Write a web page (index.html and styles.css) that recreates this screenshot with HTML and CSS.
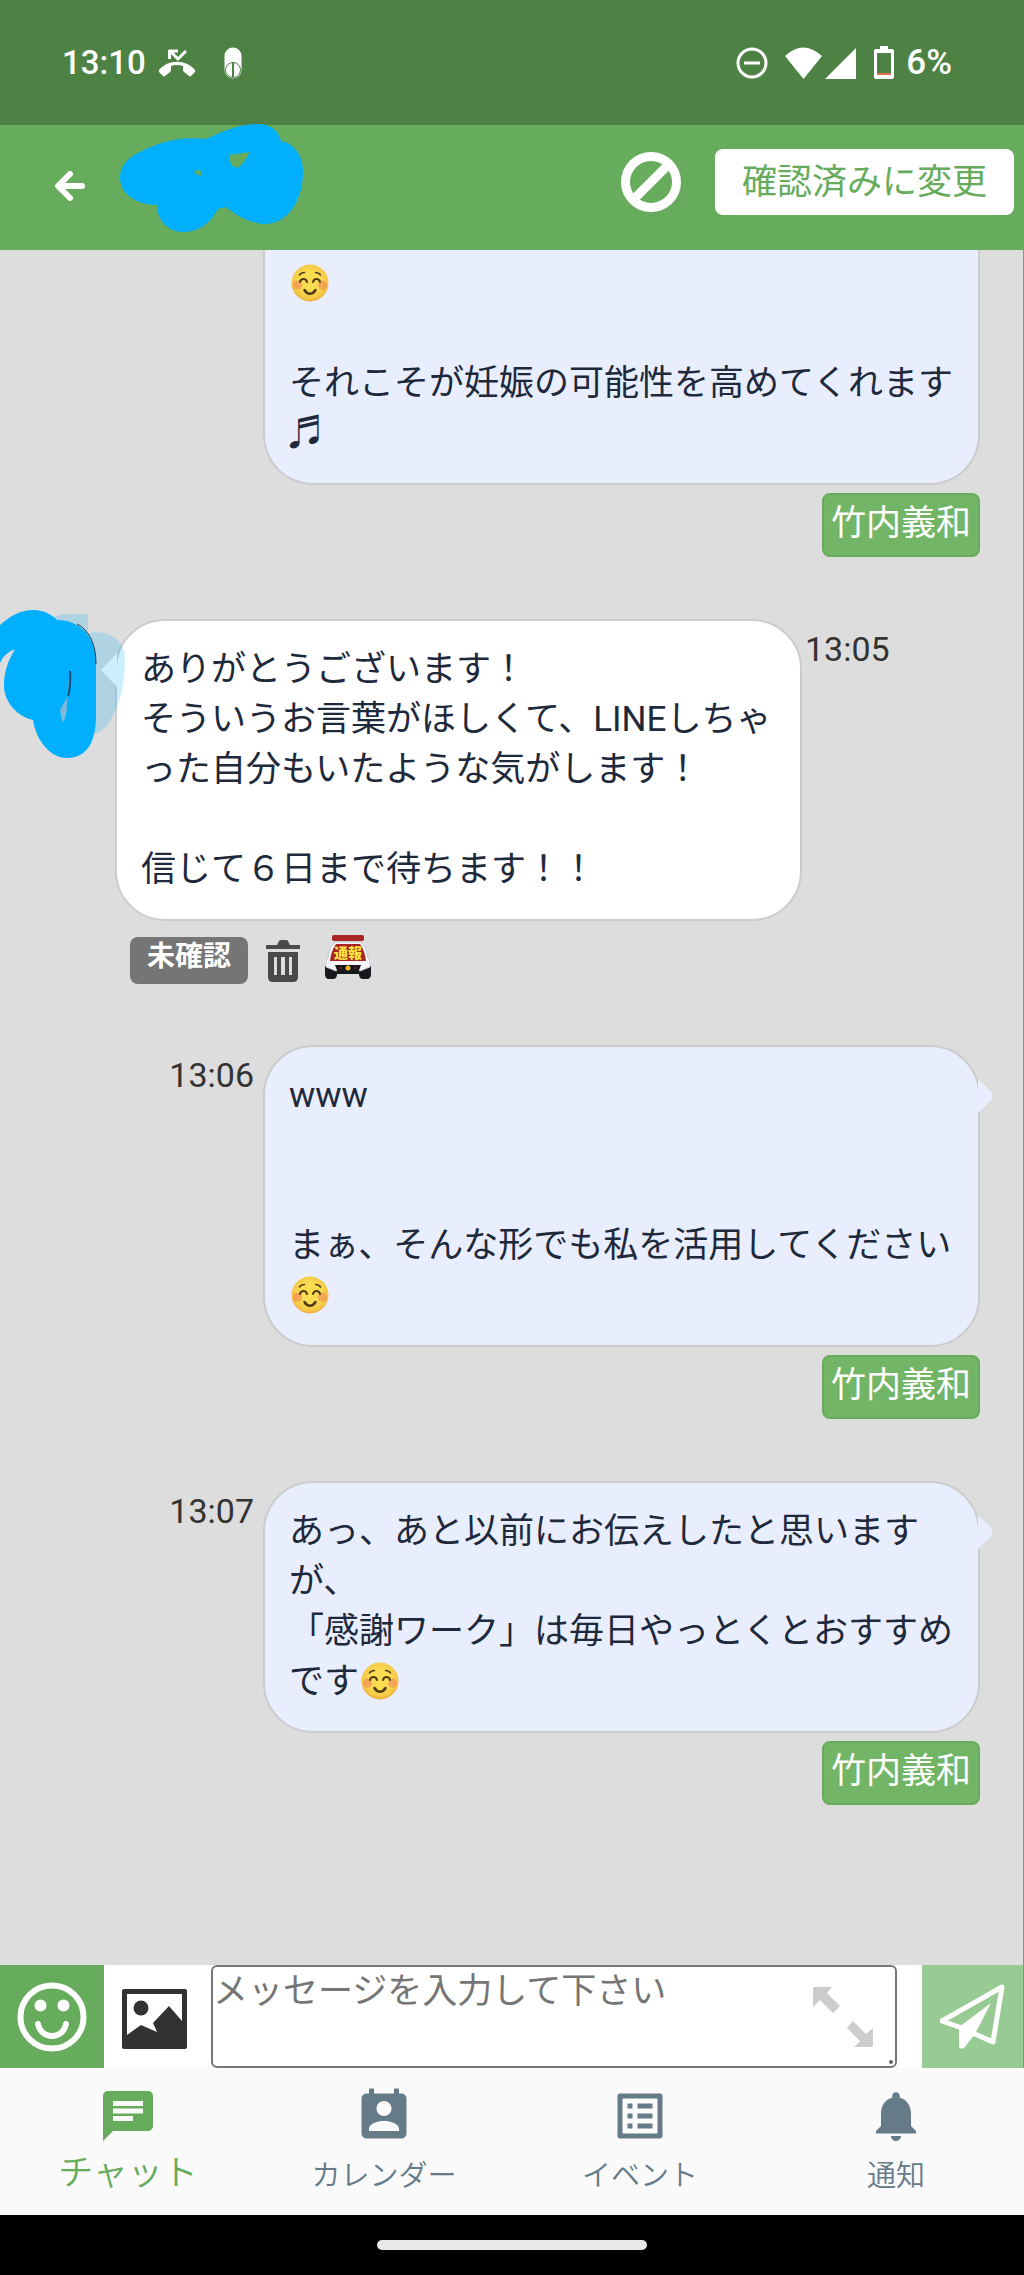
FILE: index.html
```html
<!DOCTYPE html>
<html lang="ja">
<head>
<meta charset="utf-8">
<meta name="viewport" content="width=device-width, initial-scale=1">
<title>チャット</title>
<link rel="stylesheet" href="styles.css">
</head>
<body>
<svg class="defs" aria-hidden="true">
  <defs>
    <radialGradient id="face" cx="50%" cy="45%" r="55%">
      <stop offset="0.5" stop-color="#f9dc50"/>
      <stop offset="0.85" stop-color="#f5c846"/>
      <stop offset="1" stop-color="#eda83c"/>
    </radialGradient>
    <symbol id="smile" viewBox="0 0 40 40">
      <circle cx="21" cy="20" r="18.500" fill="url(#face)"/>
      <circle cx="8.500" cy="22" r="4.500" fill="#f0865c" opacity="0.6"/>
      <circle cx="33.500" cy="22" r="4.500" fill="#f0865c" opacity="0.6"/>
      <g fill="none" stroke="#4f3a1c" stroke-width="2" stroke-linecap="round">
        <path d="M11 19c1-4 6-4 7 0M24 19c1-4 6-4 7 0"/>
        <path d="M10.500 12c1-1.500 3-2.500 5-2.500M31.500 12c-1-1.500-3-2.500-5-2.500" stroke-width="1.500"/>
        <path d="M15.500 27c3 5 8 5 11 0" stroke-width="2.500"/>
      </g>
    </symbol>
  </defs>
</svg>

<div class="app">
  <div class="status">
    <span class="status-time">13:10</span>
    <svg class="missed" viewBox="0 0 38 28" aria-hidden="true">
      <path d="M11 2h9M11.500 1v9M12 2l8 8 8-8" fill="none" stroke="#fff" stroke-width="3"/>
      <path d="M1 21C10 10 28 10 37 21q.5 1 0 2l-4 4q-1 1-2 0l-5-4q-1-1-1-2v-4q-6-2-12 0v4q0 1-1 2l-5 4q-1 1-2 0l-4-4q-.5-1 0-2z" fill="#fff"/>
    </svg>
    <svg class="mouse" viewBox="0 0 18 32" aria-hidden="true">
      <rect x="0.500" y="0.500" width="17" height="31" rx="8.500" fill="#fff"/>
      <circle cx="9" cy="23" r="7.500" fill="none" stroke="#4e8245"/>
      <path d="M9 15v15" stroke="#4e8245" stroke-width="2"/>
    </svg>
    <div class="status-right">
      <svg class="dnd" viewBox="0 0 32 32" aria-hidden="true" fill="none" stroke="#fff" stroke-width="3">
        <circle cx="16" cy="16" r="14"/><path d="M8 16h16"/>
      </svg>
      <svg class="wifi" viewBox="0 0 72 32" aria-hidden="true" fill="#fff">
        <path d="M0 9Q18-8 37 9L18.500 32z"/><path d="M71 1v31H40z"/>
      </svg>
      <svg class="battery" viewBox="0 0 20 33" aria-hidden="true">
        <path d="M6 0h8v3h4q2 0 2 2v26q0 2-2 2H2q-2 0-2-2V5q0-2 2-2h4z" fill="#fff"/>
        <path d="M3 7h14v20H3z" fill="#4e8245"/><path d="M3 27h14v2H3z" fill="#e0704a"/>
      </svg>
      <span>6%</span>
    </div>
  </div>

  <header class="topbar">
    <button class="icon-button back" aria-label="戻る">
      <svg viewBox="0 0 32 32" fill="none" stroke="#fff" stroke-width="6" stroke-linecap="round" stroke-linejoin="round">
        <path d="M16 4L4 16l12 12M5 16h23"/>
      </svg>
    </button>
    <svg class="name-cover" viewBox="0 0 184 108" aria-hidden="true">
      <path fill="#00b0ff" fill-rule="evenodd" d="M0 54C0 42 8 33 22 27C40 18 60 12 86 15C103 7 120 0 139 0C150 0 159 7 161 17C174 19 183 32 183 47C183 78 167 99 146 100C133 100 118 93 106 83L98 85C90 100 78 108 63 108C48 108 37 96 37 81C16 81 0 69 0 54zM74 49l2-3 5 1v5zM109 31l21-3q-5 10-12 16l-7-3z"/>
    </svg>
    <button class="icon-button block" aria-label="ブロック">
      <svg viewBox="0 0 60 60" fill="none" stroke="#fff" stroke-width="9">
        <circle cx="30" cy="30" r="25.500"/><path d="M15 45l30-30"/>
      </svg>
    </button>
    <button class="confirm">確認済みに変更</button>
  </header>

  <main class="chat">
    <article class="message sent">
      <div class="bubble cut">
        <svg class="emoji" role="img" aria-label="にっこり"><use href="#smile"/></svg><br><br>それこそが妊娠の可能性を高めてくれます<br>♬
      </div>
      <span class="sender">竹内義和</span>
    </article>

    <article class="message received">
      <div class="bubble">ありがとうございます！<br>そういうお言葉がほしくて、LINEしちゃった自分もいたような気がします！<br><br>信じて６日まで待ちます！！</div>
      <time>13:05</time>
      <svg class="avatar-cover" viewBox="0 0 125 150" aria-hidden="true">
        <path d="M50 10q7-6 16-6h22v19c22-4 37 8 37 25c0 43-16 77-35 77z" fill="#00b0ff" opacity="0.200"/>
        <path d="M0 15C11 5 22 0 33 0c10 0 18 4 24 10c24 0 39 18 39 42v53c0 27-9 43-29 43c-17 0-31-18-34-38C18 107 4 92 4 76c0-15 4-25 11-37C8 42 4 45 0 53z" fill="#00b0ff"/>
        <path d="M77 14c12 6 19 20 19 40" fill="none" stroke="#1d3a4c"/>
        <path d="M70 61l-2 25-8 14q1 8 3 13q5-9 4-27z" fill="#80b8d8"/>
        <path d="M70 61q1 14-2 25" fill="none" stroke="#174b78" stroke-width="2"/>
      </svg>
      <div class="actions">
        <span class="unread">未確認</span>
        <button class="icon-button trash" aria-label="削除">
          <svg viewBox="0 0 34 42">
            <path d="M0 5h11l2-4q.5-1 2-1h5q1.500 0 2 1l2 4h10v4H0zM2 12h30v25q0 5-5 5H7q-5 0-5-5z" fill="#4a4a4a"/>
            <path d="M8 17h3v18H8zM15 17h4v18h-4zM23 17h3v18h-3z" fill="#ddd"/>
          </svg>
        </button>
        <button class="icon-button report" aria-label="通報">
          <svg viewBox="0 0 48 44">
            <path d="M1 31h46v8q0 5-4 5h-4q-4 0-4-5H13q0 5-4 5H5q-4 0-4-5z" fill="#16181c"/>
            <circle cx="3" cy="26" r="2.500" fill="#dfe2ea"/><circle cx="45" cy="26" r="2.500" fill="#dfe2ea"/>
            <path d="M11 7h26q6 6 7 15q3 4 2 10l-10 4-4-2H16l-4 2-10-4q-1-6 2-10Q5 13 11 7z" fill="#f7f7fa" stroke="#c4c7d2"/>
            <path d="M12 9h24q5 7 6 17H6q1-10 6-17z" fill="#a92523"/>
            <rect x="8" y="0" width="32" height="6" rx="2" fill="#a92523"/>
            <path d="M11 30h26l-3 8H14z" fill="#16181c"/>
            <circle cx="24" cy="33" r="2.500" fill="#f4b42c"/>
            <circle cx="17" cy="33" r="1" fill="#a92523"/><circle cx="31" cy="33" r="1" fill="#a92523"/>
            <text x="24" y="23" text-anchor="middle" class="report-text">通報</text>
          </svg>
        </button>
      </div>
    </article>

    <article class="message sent">
      <time>13:06</time>
      <div class="bubble tail">www<br><br><br>まぁ、そんな形でも私を活用してください<svg class="emoji" role="img" aria-label="にっこり"><use href="#smile"/></svg></div>
      <span class="sender">竹内義和</span>
    </article>

    <article class="message sent">
      <time>13:07</time>
      <div class="bubble tail">あっ、あと以前にお伝えしたと思いますが、<br>「感謝ワーク」は毎日やっとくとおすすめです<svg class="emoji" role="img" aria-label="にっこり"><use href="#smile"/></svg></div>
      <span class="sender">竹内義和</span>
    </article>
  </main>

  <form class="composer">
    <button type="button" class="icon-button stamp" aria-label="絵文字">
      <svg viewBox="0 0 70 70" fill="none" stroke="#fff" stroke-width="6" stroke-linecap="round">
        <circle cx="35" cy="35" r="31.500"/><path d="M21 42c3 16 25 16 28 0"/>
        <g fill="#fff" stroke="none"><circle cx="23.500" cy="23.500" r="6"/><circle cx="46.500" cy="23.500" r="6"/></g>
      </svg>
    </button>
    <button type="button" class="icon-button photo" aria-label="画像">
      <svg viewBox="0 0 65 60">
        <path fill="#323232" fill-rule="evenodd" d="M2 0h61q2 0 2 2v56q0 2-2 2H2q-2 0-2-2V2q0-2 2-2zM5 5v41l14-10 16 7-4-9 16-17 13 15V5z"/>
        <circle cx="19" cy="19" r="7.500" fill="#323232"/>
      </svg>
    </button>
    <div class="field">
      <textarea aria-label="メッセージ" placeholder="メッセージを入力して下さい"></textarea>
      <svg class="expand" viewBox="0 0 60 60" aria-hidden="true">
        <path fill="#ccc" d="M2 0h17l-5 6 13 13-7 7L7 13l-7 7V2q0-2 2-2zM34 41l6-7 13 13 7-6v17q0 2-2 2H41l6-6z"/>
      </svg>
      <svg class="grip" viewBox="0 0 4 4" aria-hidden="true"><circle cx="2" cy="2" r="2" fill="#666"/></svg>
    </div>
    <button type="submit" class="icon-button send" aria-label="送信">
      <svg viewBox="0 0 66 66">
        <path d="M2 37L62 3 53 58 35 50M2 37l20 7" fill="none" stroke="#fff" stroke-width="5" stroke-linejoin="round" stroke-linecap="round"/>
        <path d="M51 19L19 43v20q2 3 5 1l11-14z" fill="#fff"/>
      </svg>
    </button>
  </form>

  <nav class="tabs">
    <a class="tab active" href="#chat">
      <svg viewBox="0 0 24 24"><path d="M20 2H4c-1.100 0-2 .9-2 2v18l4-4h14c1.100 0 2-.9 2-2V4c0-1.100-.9-2-2-2zM6 6h12v2H6zm0 3h12v2H6zm8 5H6v-2h8z"/></svg>
      <span>チャット</span>
    </a>
    <a class="tab" href="#calendar">
      <svg viewBox="0 0 24 24"><path d="M19 3h-1V1h-2v2H8V1H6v2H5c-1.100 0-2 .9-2 2v14c0 1.100.9 2 2 2h14c1.100 0 2-.9 2-2V5c0-1.100-.9-2-2-2zm-7 3c1.660 0 3 1.340 3 3s-1.340 3-3 3-3-1.340-3-3 1.340-3 3-3zm6 12H6v-1c0-2 4-3.100 6-3.100s6 1.100 6 3.100z"/></svg>
      <span>カレンダー</span>
    </a>
    <a class="tab" href="#event">
      <svg viewBox="0 0 24 24"><path d="M19 5v14H5V5h14m1.100-2H3.900c-.5 0-.9.4-.9.9v16.200c0 .4.4.9.9.9h16.200c.4 0 .9-.5.9-.9V3.900c0-.5-.5-.9-.9-.9zM11 7h6v2h-6zm0 4h6v2h-6zm0 4h6v2h-6zM7 7h2v2H7zm0 4h2v2H7zm0 4h2v2H7z"/></svg>
      <span>イベント</span>
    </a>
    <a class="tab" href="#notice">
      <svg viewBox="0 0 24 24"><path d="M12 22c1.100 0 2-.9 2-2h-4c0 1.100.9 2 2 2zm6-6v-5c0-3.070-1.630-5.640-4.500-6.320V4c0-.83-.67-1.500-1.500-1.500s-1.500.67-1.500 1.500v.68C7.640 5.360 6 7.920 6 11v5l-2 2v1h16v-1z"/></svg>
      <span>通知</span>
    </a>
  </nav>
  <div class="home"><div class="home-bar"></div></div>
</div>
</body>
</html>
```
FILE: styles.css
```css
:root {
  --green: #66ac5c;
  --text: #1e293b;
}

* {
  box-sizing: border-box;
}

body {
  margin: 0;
  color: var(--text);
  font-family: Roboto, "Noto Sans CJK JP", sans-serif;
  font-size: 35px;
  line-height: 50px;
}

button {
  font-family: inherit;
  border: 0;
}

svg {
  display: block;
  flex: none;
}

.defs {
  position: absolute;
  width: 0;
  height: 0;
}

.app {
  display: flex;
  flex-direction: column;
  min-height: 100vh;
}

.icon-button {
  display: flex;
  align-items: center;
  justify-content: center;
  padding: 0;
  background: none;
}

/* Status bar */
.status {
  display: flex;
  align-items: center;
  height: 125px;
  padding: 0 72px 0 62px;
  background: #4e8245;
  color: #fff;
  font-size: 35px;
  font-weight: 500;
}

.status-time {
  font-size: 33px;
}

.missed {
  width: 38px;
  height: 28px;
  margin-left: 12px;
}

.mouse {
  width: 18px;
  height: 32px;
  margin-left: 28px;
}

.status-right {
  display: flex;
  align-items: center;
  margin-left: auto;
}

.dnd {
  width: 32px;
  height: 32px;
  margin-right: 17px;
}

.wifi {
  width: 72px;
  height: 32px;
  margin-right: 17px;
}

.battery {
  width: 20px;
  height: 33px;
  margin-right: 12px;
}

/* Header */
.topbar {
  display: flex;
  align-items: center;
  height: 125px;
  padding: 0 10px 12px 54px;
  background: var(--green);
}

.back {
  padding-top: 8px;
}

.back svg {
  width: 32px;
  height: 32px;
}

.name-cover {
  width: 184px;
  height: 108px;
  margin-left: 34px;
  margin-bottom: 8px;
}

.block {
  margin-left: auto;
  margin-right: 34px;
}

.block svg {
  width: 60px;
  height: 60px;
}

.confirm {
  height: 66px;
  padding: 0 27px 6px;
  border-radius: 8px;
  background: #fff;
  color: var(--green);
  font-size: 35px;
}

/* Conversation */
.chat {
  display: flex;
  flex: 1;
  flex-direction: column;
  gap: 62px;
  padding-right: 43px;
  background: #ddd;
  border-right: 1px solid var(--green);
}

.message {
  display: grid;
  position: relative;
}

.sent {
  grid-template-columns: 254px 1fr;
  column-gap: 9px;
}

.bubble {
  position: relative;
  grid-row: 1;
  padding: 24px 20px 24px 24px;
  border: 2px solid #ccc;
  border-radius: 50px;
  background: #e8eefd;
}

.sent .bubble {
  grid-column: 2;
}

.cut {
  padding-top: 9px;
  border-top: 0;
  border-radius: 0 0 50px 50px;
}

.tail::after,
.received .bubble::before {
  content: "";
  position: absolute;
  top: 32px;
  width: 14px;
  height: 34px;
}

.tail::after {
  left: 100%;
  background: #e8eefd;
  clip-path: polygon(0 0, 100% 40%, 100% 60%, 0 100%);
}

.received .bubble::before {
  right: 100%;
  width: 16px;
  background: #fff;
  clip-path: polygon(0 50%, 100% 0, 100% 100%);
}

.emoji {
  display: inline-block;
  width: 40px;
  height: 40px;
  vertical-align: -8px;
}

time {
  padding-top: 5px;
  color: #333;
  font-size: 34px;
}

.sent time {
  grid-column: 1;
  grid-row: 1;
  text-align: right;
}

.sender {
  grid-column: 2;
  justify-self: end;
  margin-top: 8px;
  padding: 4px 7px 6px;
  border: 2px solid var(--green);
  border-radius: 8px;
  background: #73b566;
  color: #fff;
}

.received {
  grid-template-columns: 1fr 175px;
  column-gap: 3px;
  padding-left: 115px;
}

.received .bubble {
  padding-right: 0;
  background: #fff;
}

.avatar-cover {
  position: absolute;
  left: 0;
  top: -9px;
  width: 125px;
  height: 150px;
}

.actions {
  display: flex;
  align-items: flex-start;
  height: 62px;
  padding: 12px 0 0 15px;
}

.unread {
  width: 118px;
  height: 47px;
  margin-top: 4px;
  border-radius: 8px;
  background: #757575;
  color: #fff;
  font-size: 28px;
  font-weight: 700;
  line-height: 40px;
  text-align: center;
}

.trash {
  margin: 7px 0 0 18px;
}

.trash svg {
  width: 34px;
  height: 42px;
}

.report {
  margin: 2px 0 0 24px;
}

.report svg {
  width: 48px;
  height: 44px;
}

.report-text {
  fill: #f8e440;
  font-size: 14px;
  font-weight: 900;
}

/* Message input */
.composer {
  display: flex;
  height: 103px;
  background: #fff;
  border-right: 1px solid var(--green);
}

.stamp {
  width: 104px;
  background: var(--green);
}

.stamp svg {
  width: 70px;
  height: 70px;
}

.photo {
  width: 107px;
  padding: 4px 7px 0 0;
}

.photo svg {
  width: 65px;
  height: 60px;
}

.field {
  display: flex;
  flex: 1;
  position: relative;
}

textarea {
  flex: 1;
  min-width: 0;
  padding: 0;
  border: 2px solid #777;
  border-radius: 6px;
  background: #fff;
  color: var(--text);
  font: inherit;
  line-height: 50px;
  resize: none;
}

textarea::placeholder {
  color: #757575;
}

.expand {
  position: absolute;
  right: 24px;
  top: 22px;
  width: 60px;
  height: 60px;
}

.grip {
  position: absolute;
  right: 4px;
  bottom: 4px;
  width: 4px;
  height: 4px;
}

.send {
  width: 101px;
  margin-left: 25px;
  background: #98ca93;
}

.send svg {
  width: 66px;
  height: 66px;
}

/* Bottom navigation */
.tabs {
  display: grid;
  grid-template-columns: repeat(4, 1fr);
  height: 147px;
  background: #fafafa;
}

.tab {
  display: flex;
  flex-direction: column;
  align-items: center;
  gap: 5px;
  padding-top: 18px;
  color: #657b88;
  font-size: 29px;
  font-weight: 350;
  text-decoration: none;
}

.tab svg {
  width: 60px;
  height: 60px;
  fill: currentColor;
}

.tab.active {
  gap: 3px;
  color: var(--green);
  font-size: 35px;
}

.home {
  display: flex;
  align-items: center;
  justify-content: center;
  height: 60px;
  background: #000;
}

.home-bar {
  width: 270px;
  height: 10px;
  border-radius: 5px;
  background: #e8e8e8;
}
```
